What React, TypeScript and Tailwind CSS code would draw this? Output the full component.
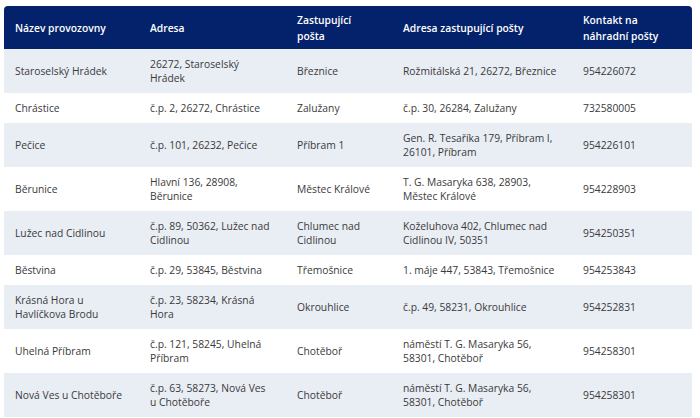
const ROWS: [string, string, string, string, string][] = [
  ["Staroselský Hrádek", "26272, Staroselský Hrádek", "Březnice", "Rožmitálská 21, 26272, Březnice", "954226072"],
  ["Chrástice", "č.p. 2, 26272, Chrástice", "Zalužany", "č.p. 30, 26284, Zalužany", "732580005"],
  ["Pečice", "č.p. 101, 26232, Pečice", "Příbram 1", "Gen. R. Tesaříka 179, Příbram I, 26101, Příbram", "954226101"],
  ["Běrunice", "Hlavní 136, 28908, Běrunice", "Městec Králové", "T. G. Masaryka 638, 28903, Městec Králové", "954228903"],
  ["Lužec nad Cidlinou", "č.p. 89, 50362, Lužec nad Cidlinou", "Chlumec nad Cidlinou", "Koželuhova 402, Chlumec nad Cidlinou IV, 50351", "954250351"],
  ["Běstvina", "č.p. 29, 53845, Běstvina", "Třemošnice", "1. máje 447, 53843, Třemošnice", "954253843"],
  ["Krásná Hora u Havlíčkova Brodu", "č.p. 23, 58234, Krásná Hora", "Okrouhlice", "č.p. 49, 58231, Okrouhlice", "954252831"],
  ["Uhelná Příbram", "č.p. 121, 58245, Uhelná Příbram", "Chotěboř", "náměstí T. G. Masaryka 56, 58301, Chotěboř", "954258301"],
  ["Nová Ves u Chotěboře", "č.p. 63, 58273, Nová Ves u Chotěboře", "Chotěboř", "náměstí T. G. Masaryka 56, 58301, Chotěboř", "954258301"],
];

const HEADERS = [
  "Název provozovny",
  "Adresa",
  "Zastupující pošta",
  "Adresa zastupující pošty",
  "Kontakt na náhradní pošty",
];

export default function App() {
  return (
    <div className="bg-white min-h-screen pt-[6px] pl-[4px] font-['Open_Sans',sans-serif]">
      <table className="w-[688px] table-fixed border-collapse text-[10.3px] leading-[14px] text-[#3a3a3a]">
        <colgroup>
          <col className="w-[135px]" />
          <col className="w-[147px]" />
          <col className="w-[106px]" />
          <col className="w-[180px]" />
          <col className="w-[120px]" />
        </colgroup>
        <thead>
          <tr className="bg-[#04226b] text-white">
            {HEADERS.map((h, i) => (
              <th
                key={h}
                className={`h-[43px] px-[11px] text-left align-middle font-semibold leading-[16px] ${
                  i === 0 ? "rounded-tl-[4px]" : ""
                } ${i === HEADERS.length - 1 ? "rounded-tr-[4px] pr-[20px]" : ""}`}
              >
                {h}
              </th>
            ))}
          </tr>
        </thead>
        <tbody>
          {ROWS.map((row, r) => (
            <tr key={r} className={r % 2 === 0 ? "bg-[#e9edf4]" : "bg-white"}>
              {row.map((cell, c) => (
                <td
                  key={c}
                  className={`pl-[11px] py-[8px] align-middle ${c === 1 ? "pr-[16px]" : "pr-[11px]"}`}
                >
                  {cell}
                </td>
              ))}
            </tr>
          ))}
        </tbody>
      </table>
    </div>
  );
}
